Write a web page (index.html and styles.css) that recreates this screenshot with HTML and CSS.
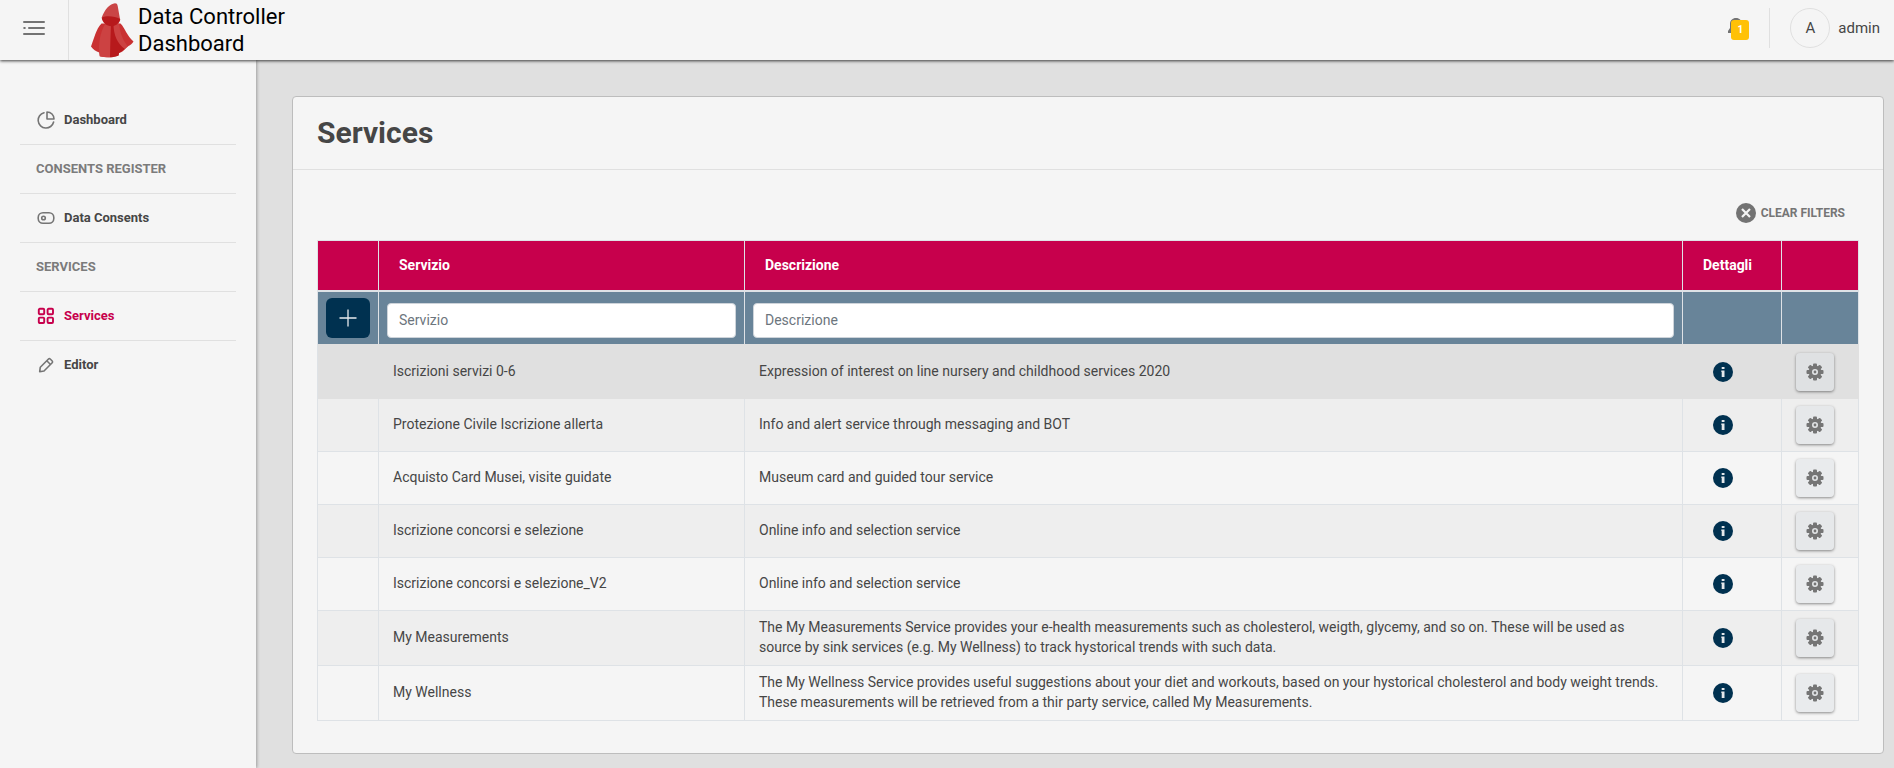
FILE: index.html
```html
<!DOCTYPE html>
<html lang="it">
<head>
<meta charset="utf-8">
<title>Data Controller Dashboard</title>
<link rel="stylesheet" href="styles.css">
</head>
<body>
<svg class="defs" width="0" height="0">
  <symbol id="info" viewBox="0 0 20 20"><circle cx="10" cy="10" r="10" fill="#003150"/><path d="M8.700 5h2.800v2H8.700zM8.300 8.500h3.200V15H8.700v-5h-.4z" fill="#e4e8eb"/></symbol>
  <symbol id="gear" viewBox="0 0 18 18"><g fill="#757575"><circle cx="9" cy="9" r="6.400"/><rect x="7" y=".5" width="4" height="17" rx="1"/><rect x="7" y=".5" width="4" height="17" rx="1" transform="rotate(45 9 9)"/><rect x="7" y=".5" width="4" height="17" rx="1" transform="rotate(90 9 9)"/><rect x="7" y=".5" width="4" height="17" rx="1" transform="rotate(135 9 9)"/></g><circle cx="9" cy="9" r="2.200" fill="#757575" stroke="#e2e4e6" stroke-width="1.600"/></symbol>
</svg>
<header class="topbar">
  <div class="menu"><svg width="22" height="14" viewBox="0 0 22 14" stroke="#737373" stroke-width="2" stroke-linecap="round"><path d="M1 1h20M6 7h15M1 13h20M1.200 7h.6"/></svg></div>
  <div class="brand">
    <svg class="logo" width="44" height="56" viewBox="0 0 44 56">
      <path d="M10.500 21.500C5 27 3 37 0 44.500c2 3 5 5 8.300 6l.5 3.700c6 1.600 13 1.500 18.700-.7l.5-2.500c3-1 5-2.500 6-4l3.500-3c2-1 3.700-2.500 5-4.500C36 34 34 26 29.500 21.500z" fill="#c93132"/>
      <path d="M14 22C9 31 7.500 41 8.300 50.500l.5 3.700c3 .9 6.500 1.200 10.200 1.100L20 23z" fill="#cc4242"/>
      <path d="M20 22l-1 33.300c3 0 6-.6 8.500-1.800L28 51l6-4C27 41 24 32 23 22z" fill="#b7191c"/>
      <path d="M22.500 22c0 11 4 20 11.500 25l2.500-3C31 37 29 30 28 21.500z" fill="#cc4242"/>
      <path d="M10.700 15.500C14 7 19 1.800 24 1.300c1.500 0 2.400.7 2.700 2.700L29 17l-8 2z" fill="#ca4546"/>
      <path d="M10.700 15.500c5-2 13-1.500 18.500 1.500.3 3.500-4 6.800-8.700 7.300-5-.5-9.300-3.500-9.800-8.800z" fill="#b7191c"/>
    </svg>
    <div class="title">Data Controller<br>Dashboard</div>
  </div>
  <div class="user">
    <div class="bell"><svg width="18" height="20" viewBox="0 0 18 20"><path d="M1 16v-2l2-3V7c0-3.500 2.500-6 6-6s6 2.500 6 6v4l2 3v2z" fill="#737373"/></svg><span class="badge">1</span></div>
    <div class="avatar">A</div>
    <div class="name">admin</div>
  </div>
</header>
<div class="page">
  <nav class="sidebar">
    <a class="item"><svg viewBox="0 0 18 18"><path d="M7 1.700A7.800 7.800 0 1 0 16.600 11M10 1v7h7c0-4-3-7-7-7z"/></svg>Dashboard</a>
    <div class="item group">CONSENTS REGISTER</div>
    <a class="item"><svg viewBox="0 0 18 18"><rect x="1.200" y="3.700" width="15.600" height="10.600" rx="4.800"/><circle cx="6.500" cy="9" r="1.800"/></svg>Data Consents</a>
    <div class="item group">SERVICES</div>
    <a class="item active"><svg viewBox="0 0 18 18"><rect x="1.800" y="1.800" width="5.400" height="5.400" rx="1"/><rect x="10.600" y="1.800" width="5.400" height="5.400" rx="1"/><rect x="1.800" y="10.600" width="5.400" height="5.400" rx="1"/><rect x="10.600" y="10.600" width="5.400" height="5.400" rx="1"/></svg>Services</a>
    <a class="item"><svg viewBox="0 0 18 18"><path d="M2.700 15.700l.6-4.500L11.500 3c.5-.5 1.200-.5 1.700 0l2 2c.5.5.5 1.200 0 1.700L7 15zM9.800 4.800l3.700 3.700"/></svg>Editor</a>
  </nav>
  <main class="main">
    <section class="card">
      <h1>Services</h1>
      <div class="content">
        <div class="clear"><svg width="20" height="20" viewBox="0 0 20 20"><circle cx="10" cy="10" r="10" fill="#737373"/><path d="M6 6l8 8M14 6l-8 8" stroke="#f4f4f4" stroke-width="2.200"/></svg><span>CLEAR FILTERS</span></div>
        <div class="table">
          <div class="row head"><div></div><div>Servizio</div><div>Descrizione</div><div>Dettagli</div><div></div></div>
          <div class="row filters"><div><button class="add"><svg width="18" height="18" viewBox="0 0 18 18"><path d="M9 .5v17M.5 9h17" stroke="#e6eaed" stroke-width="1.300"/></svg></button></div><div><input placeholder="Servizio"></div><div><input placeholder="Descrizione"></div><div></div><div></div></div>
          <div class="row first"><div></div><div>Iscrizioni servizi 0-6</div><div>Expression of interest on line nursery and childhood services 2020</div><div><svg class="info"><use href="#info"/></svg></div><div><button class="cog"><svg><use href="#gear"/></svg></button></div></div>
          <div class="row alt"><div></div><div>Protezione Civile Iscrizione allerta</div><div>Info and alert service through messaging and BOT</div><div><svg class="info"><use href="#info"/></svg></div><div><button class="cog"><svg><use href="#gear"/></svg></button></div></div>
          <div class="row"><div></div><div>Acquisto Card Musei, visite guidate</div><div>Museum card and guided tour service</div><div><svg class="info"><use href="#info"/></svg></div><div><button class="cog"><svg><use href="#gear"/></svg></button></div></div>
          <div class="row alt"><div></div><div>Iscrizione concorsi e selezione</div><div>Online info and selection service</div><div><svg class="info"><use href="#info"/></svg></div><div><button class="cog"><svg><use href="#gear"/></svg></button></div></div>
          <div class="row"><div></div><div>Iscrizione concorsi e selezione_V2</div><div>Online info and selection service</div><div><svg class="info"><use href="#info"/></svg></div><div><button class="cog"><svg><use href="#gear"/></svg></button></div></div>
          <div class="row alt tall"><div></div><div>My Measurements</div><div>The My Measurements Service provides your e-health measurements such as cholesterol, weigth, glycemy, and so on. These will be used as source by sink services (e.g. My Wellness) to track hystorical trends with such data.</div><div><svg class="info"><use href="#info"/></svg></div><div><button class="cog"><svg><use href="#gear"/></svg></button></div></div>
          <div class="row tall"><div></div><div>My Wellness</div><div>The My Wellness Service provides useful suggestions about your diet and workouts, based on your hystorical cholesterol and body weight trends. These measurements will be retrieved from a thir party service, called My Measurements.</div><div><svg class="info"><use href="#info"/></svg></div><div><button class="cog"><svg><use href="#gear"/></svg></button></div></div>
        </div>
      </div>
    </section>
  </main>
</div>
</body>
</html>
```
FILE: styles.css
```css
* { box-sizing: border-box; }
body { margin: 0; height: 768px; overflow: hidden; display: flex; flex-direction: column; background: #e0e0e0; color: #464646; font-family: Roboto, sans-serif; font-size: 14px; }
.defs { position: absolute; }
svg { display: block; flex: none; }
.topbar { height: 60px; flex: none; display: flex; background: #f5f5f5; box-shadow: 0 1px 3px rgba(0,0,0,.75); position: relative; z-index: 2; }
.menu { width: 69px; border-right: 1px solid #e0e0e0; padding: 21px 0 0 23px; }
.brand { display: flex; flex: 1; padding-left: 22px; }
.logo { margin-top: 2px; }
.title { color: #000; font-size: 22px; line-height: 27px; padding: 3px 0 0 3px; }
.user { display: flex; align-items: center; padding: 0 14px 4px 0; }
.bell { position: relative; width: 43px; height: 40px; border-right: 1px solid #e0e0e0; padding-top: 9px; }
.badge { position: absolute; left: 4px; top: 12px; width: 18px; height: 20px; border-radius: 3px; background: #ffc107; color: #fff; font-size: 10px; font-weight: 700; line-height: 20px; text-align: center; }
.avatar { width: 40px; height: 40px; margin: 0 8px 0 20px; border: 1px solid #e0e0e0; border-radius: 50%; line-height: 38px; text-align: center; font-size: 15px; }
.name { font-size: 15px; }
.page { flex: 1; display: flex; min-height: 0; }
.sidebar { width: 256px; flex: none; background: #f5f5f5; padding: 36px 20px 0; box-shadow: 1px 0 3px rgba(0,0,0,.3); }
.item { height: 49px; display: flex; align-items: center; border-bottom: 1px solid #e0e0e0; padding: 0 0 2px 16px; font-size: 13px; font-weight: 700; }
.item:last-child { border-color: transparent; }
.item svg { width: 18px; height: 18px; margin: 1px 9px 0 1px; fill: none; stroke: #757575; stroke-width: 1.6; stroke-linejoin: round; stroke-linecap: round; }
.item.group { color: #7b7b7b; }
.item.active { color: #c7004c; }
.item.active svg { stroke: #c7004c; stroke-width: 1.9; }
.main { flex: 1; padding: 36px 10px 14px 36px; }
.card { height: 658px; background: #f5f5f5; border: 1px solid #bdbdbd; border-radius: 4px; }
h1 { margin: 0; height: 73px; border-bottom: 1px solid #e0e0e0; padding: 18px 24px 17px; font-size: 30px; line-height: 36px; font-weight: 700; }
.content { padding: 33px 24px 0; }
.clear { display: flex; align-items: center; justify-content: flex-end; gap: 5px; height: 20px; margin-right: 14px; color: #757575; font-size: 12px; font-weight: 700; }
.table { margin-top: 17px; border-top: 1px solid #dee2e6; border-left: 1px solid #dee2e6; }
.row { display: grid; grid-template-columns: 61px 366px 938px 99px 77px; height: 53px; line-height: 20px; }
.row > div { display: flex; align-items: center; border-right: 1px solid #dee2e6; border-bottom: 1px solid #dee2e6; padding: 0 14px 2px; }
.row > div:nth-child(4) { padding-left: 30px; }
.row > div:nth-child(5) { padding-left: 14px; }
.alt { background: #eee; }
.row.first { height: 55px; background: #e0e0e0; }
.row.first > div { border-color: #e0e0e0; padding-bottom: 0; }
.tall { height: 55px; }
.row.head { height: 51px; background: #c7004c; color: #fff; font-weight: 700; }
.row.head > div { border-bottom-width: 2px; padding-left: 20px; }
.row.filters { height: 52px; background: #688499; }
.row.filters > div { border-bottom: 0; padding: 5px 8px 0; }
.add { width: 44px; height: 40px; margin-top: -5px; border: 0; border-radius: 6px; background: #003150; display: flex; align-items: center; justify-content: center; }
input { width: 100%; height: 35px; border: 1px solid #ced4da; border-radius: 4px; padding: 0 11px 2px; background: #fff; font: 14px Roboto, sans-serif; }
input::placeholder { color: #6c757d; }
.info { width: 20px; height: 20px; margin-top: 1px; }
.cog { width: 38px; height: 38px; border: 0; border-radius: 4px; padding: 0; margin-top: 1px; background: rgba(222,226,230,.5); display: flex; align-items: center; justify-content: center; box-shadow: 0 1px 3px rgba(0,0,0,.45); }
.cog svg { width: 18px; height: 18px; }
```
